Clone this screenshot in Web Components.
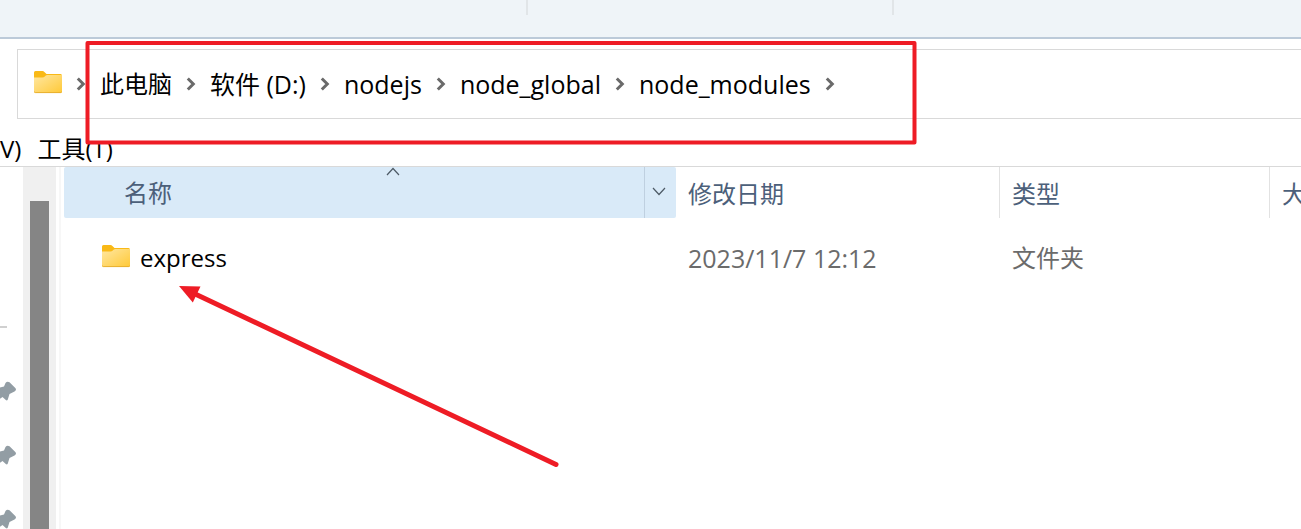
<!DOCTYPE html>
<html lang="zh-CN">
<head>
<meta charset="utf-8">
<title>node_modules</title>
<style>
  body {
    margin: 0;
    background: #fff;
    color: #000;
    font: 24px/32px "Open Sans", "Noto Sans CJK SC", sans-serif;
  }
</style>
</head>
<body>
<file-explorer></file-explorer>
<script>
function define(name, html) {
  const template = document.createElement('template');
  template.innerHTML = html;
  customElements.define(name, class extends HTMLElement {
    constructor() {
      super();
      this.attachShadow({ mode: 'open' }).append(template.content.cloneNode(true));
    }
  });
}

define('folder-icon', `
  <style>:host { display: block; flex: none; width: 28px; height: 24px } svg { display: block }</style>
  <svg width="28" height="24" viewBox="0 0 28 24" aria-hidden="true">
    <defs><linearGradient id="g" x1="0" y1="0" x2="1" y2="1">
      <stop offset="0" stop-color="#ffe7a2"/><stop offset="1" stop-color="#ffc937"/>
    </linearGradient></defs>
    <path d="M0 2.500Q0 1 1.500 1H8.500Q9.600 1 10.400 1.900L12.500 4H26.500Q28 4 28 5.500V10H0Z" fill="#f9b916"/>
    <path d="M0 7.500H8.500Q9.800 7.500 10.800 6.500L11.800 5.400Q12.400 4.900 13.400 4.900H28V21.500Q28 23 26.500 23H1.500Q0 23 0 21.500Z" fill="url(#g)"/>
    <path d="M.2 21.500Q.4 22.600 1.500 22.600H26.500Q27.600 22.600 27.800 21.500" fill="none" stroke="#e5ab2b" stroke-width=".9"/>
  </svg>`);

define('crumb-chevron', `
  <style>:host { display: block; flex: none; width: 10px; height: 14px } svg { display: block }</style>
  <svg width="10" height="14" viewBox="0 0 10 14" aria-hidden="true">
    <path d="M1.800 1.500L7.300 7L1.800 12.500" fill="none" stroke="#6a6a6a" stroke-width="3"/>
  </svg>`);

define('pin-icon', `
  <style>:host { display: block; width: 16px; height: 20px } svg { display: block }</style>
  <svg width="16" height="20" viewBox="0 0 16 20" aria-hidden="true">
    <path d="M0 6.500L4 5.500L5.500 2Q7 0 9.500 1.200L15.300 7Q17 9 14.500 10.500L9.500 13L7.800 18.500Q7 20 5.800 19L2.500 16L0 17.800Z" fill="#929da4"/>
  </svg>`);

define('tab-strip', `
  <style>
    :host { display: grid; grid-template-columns: 528px 366px 1fr; height: 37px; border-bottom: 2px solid #bccad9;
            background: #eff4f8 }
    i { height: 15px; border-right: 2px solid #e1e5e8 }
    i:last-child { border: 0 }
  </style>
  <i></i><i></i><i></i>`);

define('path-crumb', `
  <style>
    :host { display: flex; align-items: center; gap: 14px; font-size: 25px }
    :host([lang="zh"]) { font-size: 24px }
    a { color: inherit; text-decoration: none; white-space: nowrap }
  </style>
  <a href="#"><slot></slot></a><crumb-chevron></crumb-chevron>`);

define('address-bar', `
  <style>
    :host { display: block; padding: 10px 0 0 17px }
    nav { display: flex; align-items: center; gap: 14px; height: 68px; padding-left: 16px;
          border: 1px solid #d9d9d9; border-right: 0 }
    .root { display: flex; align-items: center; gap: 14px }
    folder-icon { margin-bottom: 4px }
  </style>
  <nav aria-label="路径">
    <span class="root"><folder-icon></folder-icon><crumb-chevron></crumb-chevron></span>
    <slot></slot>
  </nav>`);

define('menu-strip', `
  <style>
    :host { display: flex; gap: 16px; height: 47px; align-items: flex-end; border-bottom: 1px solid #d9d9d9 }
    button { font: inherit; color: inherit; background: none; border: 0; padding: 0 0 1px }
    button:first-child { margin-left: -5px }
  </style>
  <button>V)</button><button>工具(T)</button>`);

define('side-pane', `
  <style>
    :host { display: flex; flex: none; width: 61px; box-sizing: border-box; border-right: 2px solid #f7f7f7 }
    .list { width: 23px; padding-top: 159px }
    hr { width: 7px; height: 2px; margin: 0 0 53px; border: 0; background: #d0d0d0 }
    pin-icon { margin-bottom: 44px }
    .track { width: 33px; background: #f0f0f0; padding-top: 34px; box-sizing: border-box; display: flex; justify-content: center }
    .thumb { width: 19px; background: #858585 }
  </style>
  <div class="list"><hr><pin-icon></pin-icon><pin-icon></pin-icon><pin-icon></pin-icon></div>
  <div class="track"><div class="thumb"></div></div>`);

define('file-table', `
  <style>
    :host { display: block; flex: 1; min-width: 0; padding-left: 3px }
    table { width: 100%; table-layout: fixed; border-collapse: separate; border-spacing: 0 }
    .name { width: 612px } .date { width: 324px } .type { width: 270px }
    th, td { padding: 0; font-weight: 400; text-align: left; white-space: nowrap }
    th { height: 51px; color: #4c607a }
    th + th { border-right: 1px solid #e2e2e2 }
    th:last-child { border: 0; overflow: hidden }
    button { font: inherit; color: inherit; background: none; border: 0; padding: 0 0 0 12px; text-align: left; vertical-align: middle }
    .sorted { display: grid; grid-template-columns: 1fr 31px; height: 51px; background: #d9eaf8; border-radius: 2px }
    .sorted button:first-child { position: relative; padding-left: 60px; border-right: 1px solid #bfd0e0 }
    .sorted button:last-child { padding: 0 4px 2px 0; display: grid; place-items: center }
    svg { display: block; fill: none; stroke: #4d5a66; stroke-width: 1.200 }
    .up { position: absolute; left: calc(50% + 32px); top: 0 }
    td { height: 80px; padding-left: 12px; color: #6b6b6b; font-size: 25px }
    td:last-child, td:nth-child(3) { font-size: 24px }
    td:first-child { padding-left: 38px; font-size: 24px }
    .file { display: flex; align-items: center; gap: 10px; color: #000 }
    .file a { color: inherit; text-decoration: none }
    folder-icon { margin-bottom: 4px }
  </style>
  <table>
    <colgroup><col class="name"><col class="date"><col class="type"><col></colgroup>
    <thead><tr>
      <th><div class="sorted">
        <button>名称<svg class="up" width="14" height="9"><path d="M1 8L7 1.500L13 8"/></svg></button>
        <button aria-label="筛选"><svg width="14" height="9"><path d="M1 1L7 7.500L13 1"/></svg></button>
      </div></th>
      <th><button>修改日期</button></th><th><button>类型</button></th><th><button>大</button></th>
    </tr></thead>
    <tbody><tr>
      <td><span class="file"><folder-icon></folder-icon><a href="#">express</a></span></td>
      <td>2023/11/7 12:12</td><td>文件夹</td><td></td>
    </tr></tbody>
  </table>`);

define('red-markup', `
  <style>:host { position: absolute; left: 0; top: 0; pointer-events: none } svg { display: block }</style>
  <svg width="920" height="480" viewBox="0 0 920 480" aria-hidden="true">
    <rect x="87.500" y="43" width="827" height="99.500" fill="none" stroke="#ee1c25" stroke-width="4" stroke-linejoin="round"/>
    <path d="M192 292.500L556 464.500" stroke="#ee1c25" stroke-width="5" stroke-linecap="round"/>
    <path d="M179 286L200.500 286.500L192.800 302.500Z" fill="#ee1c25"/>
  </svg>`);

define('file-explorer', `
  <style>
    :host { display: flex; flex-direction: column; position: relative; height: 100vh; overflow: hidden }
    main { display: flex; flex: 1; min-height: 0; overflow: hidden }
  </style>
  <tab-strip></tab-strip>
  <address-bar>
    <path-crumb lang="zh">此电脑</path-crumb><path-crumb>软件 (D:)</path-crumb><path-crumb>nodejs</path-crumb>
    <path-crumb>node_global</path-crumb><path-crumb>node_modules</path-crumb>
  </address-bar>
  <menu-strip></menu-strip>
  <main><side-pane></side-pane><file-table></file-table></main>
  <red-markup></red-markup>`);
</script>
</body>
</html>
